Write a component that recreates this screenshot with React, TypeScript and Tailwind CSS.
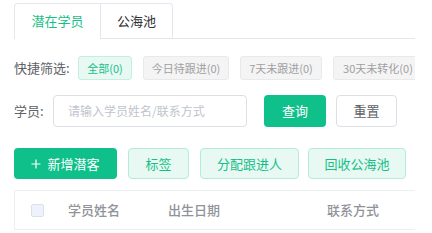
const font = { fontFamily: '"Noto Sans CJK SC", "Noto Sans", sans-serif' };

function Chip({ label, active, w }: { label: string; active?: boolean; w: string }) {
  return (
    <div
      className={`${w} h-[24px] shrink-0 flex items-center justify-center rounded-[3px] border text-[11px] ${
        active ? 'bg-[#e8f9f3] border-[#c2efdf] text-[#17bf88]' : 'bg-[#f4f4f5] border-[#e9e9eb] text-[#a0a0a0]'
      }`}
    >
      {label}
    </div>
  );
}

function LightBtn({ label, w }: { label: string; w: string }) {
  return (
    <button className={`${w} h-[31px] shrink-0 rounded-[4px] border border-[#b3ecd9] bg-[#e8f9f3] text-[13px] text-[#17bf88]`}>
      {label}
    </button>
  );
}

export default function App() {
  return (
    <div className="w-[432px] h-[233px] overflow-hidden bg-white" style={font}>
      <div className="w-[415px] pl-[14px] overflow-hidden">
        {/* tabs */}
        <div className="flex items-end mt-[3px]">
          <div className="flex border-l border-t border-r border-[#e4e7ed] rounded-t-[4px]">
            <div className="w-[85px] h-[35px] flex items-center justify-center border-b border-white text-[13px] text-[#17bf88]">
              潜在学员
            </div>
            <div className="w-[72px] h-[35px] flex items-center justify-center border-l border-b border-[#e4e7ed] text-[13px] text-[#303133]">
              公海池
            </div>
          </div>
          <div className="flex-1 border-b border-[#e4e7ed]" />
        </div>

        {/* quick filter */}
        <div className="flex items-center mt-[17px] h-[24px]">
          <span className="text-[13px] text-[#606266] w-[64px] shrink-0">快捷筛选:</span>
          <div className="flex gap-[11px]">
            <Chip label="全部(0)" active w="w-[54px]" />
            <Chip label="今日待跟进(0)" w="w-[86px]" />
            <Chip label="7天未跟进(0)" w="w-[82px]" />
            <Chip label="30天未转化(0)" w="w-[90px]" />
          </div>
        </div>

        {/* search */}
        <div className="flex items-center mt-[15px] h-[32px]">
          <span className="text-[13px] text-[#606266] w-[39px] shrink-0">学员:</span>
          <div className="w-[194px] h-[32px] shrink-0 rounded-[4px] border border-[#dcdfe6] flex items-center px-[14px] text-[12px] text-[#c0c4cc]">
            请输入学员姓名/联系方式
          </div>
          <button className="ml-[17px] w-[62px] h-[32px] shrink-0 rounded-[4px] bg-[#0fc08a] text-white text-[13px]">查询</button>
          <button className="ml-[10px] w-[61px] h-[32px] shrink-0 rounded-[4px] border border-[#dcdfe6] bg-white text-[#606266] text-[13px]">
            重置
          </button>
        </div>

        {/* actions */}
        <div className="flex items-center mt-[21px] gap-[11px]">
          <button className="w-[103px] h-[31px] shrink-0 rounded-[4px] bg-[#0fc08a] text-white text-[13px] flex items-center justify-center gap-[6px]">
            <svg width="10" height="10" viewBox="0 0 10 10" className="shrink-0">
              <path d="M5 0.5v9M0.5 5h9" stroke="white" strokeWidth="1.2" />
            </svg>
            新增潜客
          </button>
          <LightBtn label="标签" w="w-[61px]" />
          <LightBtn label="分配跟进人" w="w-[99px]" />
          <div className="-ml-[2px]">
            <LightBtn label="回收公海池" w="w-[98px]" />
          </div>
        </div>

        {/* table header */}
        <div className="mt-[11px] h-[40px] border-t border-l border-b border-[#ebeef5] flex items-center text-[13px] font-medium text-[#909399]">
          <div className="w-[53px] shrink-0 flex pl-[16px]">
            <div className="w-[13px] h-[13px] rounded-[2px] border border-[#dcdfe6] bg-[#edf2fc]" />
          </div>
          <div className="w-[100px] shrink-0">学员姓名</div>
          <div className="w-[159px] shrink-0">出生日期</div>
          <div className="shrink-0">联系方式</div>
        </div>
      </div>
    </div>
  );
}
